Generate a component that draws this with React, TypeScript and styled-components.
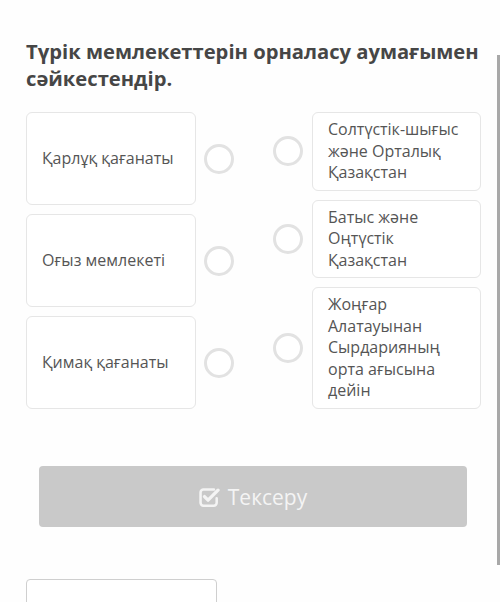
import React from 'react';
import styled, { createGlobalStyle } from 'styled-components';

const GlobalStyle = createGlobalStyle`
  html, body {
    margin: 0;
    padding: 0;
    background: #fefefe;
    overflow: hidden;
  }
  body {
    font-family: "Open Sans", "Noto Sans", sans-serif;
  }
`;

const Page = styled.div`
  display: flex;
  align-items: flex-start;
  height: 602px;
  overflow: hidden;
`;

const Main = styled.div`
  width: 497px;
  box-sizing: border-box;
  padding: 38px 0 0 26px;
`;

const ScrollTrack = styled.div`
  width: 3px;
  height: 510px;
  margin-top: 55px;
  background: #a8a8a8;
`;

const Title = styled.h2`
  margin: 0;
  font-size: 20.2px;
  line-height: 27px;
  font-weight: 700;
  color: #464646;
`;

const Match = styled.div`
  display: flex;
  align-items: flex-start;
  margin-top: 20px;
`;

const Column = styled.div<{ $offset?: number }>`
  display: flex;
  flex-direction: column;
  gap: 9px;
  margin-left: ${p => p.$offset ?? 0}px;
`;

const Row = styled.div<{ $gap: number }>`
  display: flex;
  align-items: center;
  gap: ${p => p.$gap}px;
`;

const Card = styled.div<{ $height?: number; $width: number }>`
  box-sizing: border-box;
  width: ${p => p.$width}px;
  ${p => (p.$height ? `height: ${p.$height}px;` : '')}
  display: flex;
  align-items: center;
  padding: 6px 14px 6px 15px;
  border: 1px solid #e6e6e6;
  border-radius: 6px;
  background: #fff;
  font-size: 16px;
  line-height: 21.5px;
  color: #555;
`;

const Dot = styled.div`
  box-sizing: border-box;
  width: 30px;
  height: 30px;
  flex: none;
  border: 3px solid #e2e2e2;
  border-radius: 50%;
  background: #fff;
`;

const CheckButton = styled.button`
  display: flex;
  align-items: center;
  justify-content: center;
  gap: 8px;
  width: 428px;
  height: 61px;
  margin: 57px 0 0 13px;
  border: none;
  border-radius: 4px;
  background: #c9c9c9;
  color: #f4f4f4;
  font-family: inherit;
  font-size: 21px;
`;

const BackButton = styled.button`
  display: block;
  width: 191px;
  height: 50px;
  margin-top: 52px;
  box-sizing: border-box;
  border: 1px solid #cfcfcf;
  border-radius: 4px;
  background: #fff;
  padding-top: 18px;
  color: #555;
  font-family: inherit;
  font-size: 18px;
  text-align: center;
`;

const CheckIcon = () => (
  <svg width="21" height="21" viewBox="0 0 19 19" fill="none">
    <path
      d="M13.5 3.2H4a2.6 2.6 0 0 0-2.6 2.6v9.4A2.6 2.6 0 0 0 4 17.8h9.4a2.6 2.6 0 0 0 2.6-2.6V11"
      stroke="#f4f4f4"
      strokeWidth="2.3"
      strokeLinecap="round"
    />
    <path
      d="M5 9.6l3.2 3.2 9-9"
      stroke="#f4f4f4"
      strokeWidth="3"
      strokeLinecap="round"
      strokeLinejoin="round"
    />
  </svg>
);

const left = ['Қарлұқ қағанаты', 'Оғыз мемлекеті', 'Қимақ қағанаты'];
const right = [
  'Солтүстік-шығыс және Орталық Қазақстан',
  'Батыс және Оңтүстік Қазақстан',
  'Жоңғар Алатауынан Сырдарияның орта ағысына дейін',
];

export default function App() {
  return (
    <Page>
      <GlobalStyle />
      <Main>
        <Title>
          Түрік мемлекеттерін орналасу аумағымен
          <br />
          сәйкестендір.
        </Title>
        <Match>
          <Column>
            {left.map(t => (
              <Row $gap={8} key={t}>
                <Card $width={170} $height={93}>{t}</Card>
                <Dot />
              </Row>
            ))}
          </Column>
          <Column $offset={39}>
            {right.map(t => (
              <Row $gap={9} key={t}>
                <Dot />
                <Card $width={169}>{t}</Card>
              </Row>
            ))}
          </Column>
        </Match>
        <CheckButton>
          <CheckIcon />
          Тексеру
        </CheckButton>
        <BackButton>Артқа</BackButton>
      </Main>
      <ScrollTrack />
    </Page>
  );
}
